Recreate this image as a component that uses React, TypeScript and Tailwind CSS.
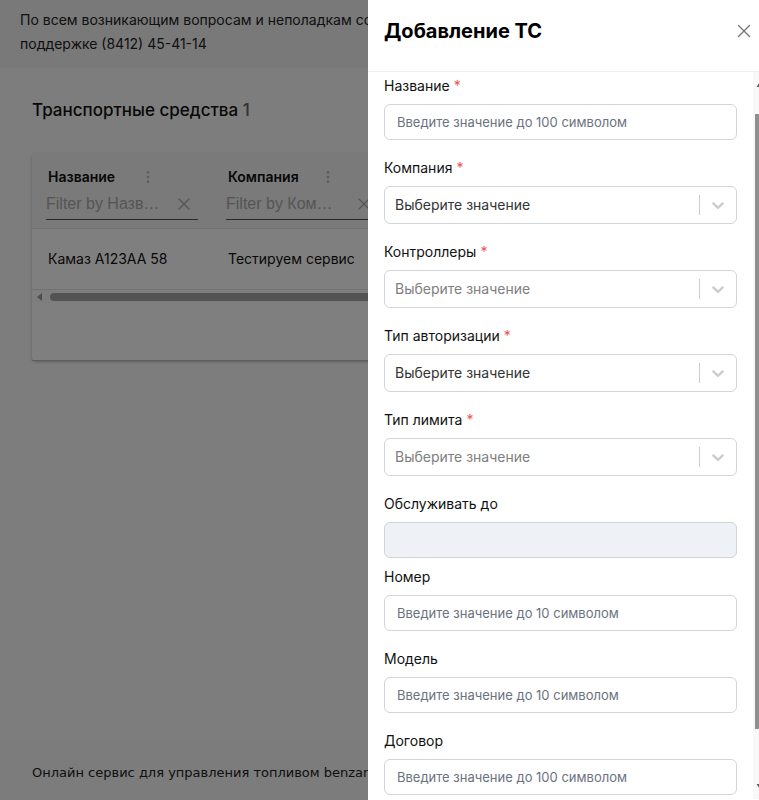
import React from "react";
import { X, EllipsisVertical } from "lucide-react";

const fields = [
  { label: "Название", kind: "input", required: true, placeholder: "Введите значение до 100 символом" },
  { label: "Компания", kind: "select", required: true, dark: true },
  { label: "Контроллеры", kind: "select", required: true },
  { label: "Тип авторизации", kind: "select", required: true, dark: true },
  { label: "Тип лимита", kind: "select", required: true },
  { label: "Обслуживать до", kind: "disabled" },
  { label: "Номер", kind: "input", placeholder: "Введите значение до 10 символом" },
  { label: "Модель", kind: "input", placeholder: "Введите значение до 10 символом" },
  { label: "Договор", kind: "input", placeholder: "Введите значение до 100 символом" },
];

function Chevron() {
  return (
    <svg viewBox="0 0 20 20" width="20" height="20" fill="#cccccc">
      <path d="M4.516 7.548c0.436-0.446 1.043-0.481 1.576 0l3.908 3.747 3.908-3.747c0.533-0.481 1.141-0.446 1.574 0 0.436 0.445 0.408 1.197 0 1.615-0.406 0.418-4.695 4.502-4.695 4.502-0.217 0.223-0.502 0.335-0.787 0.335s-0.57-0.112-0.789-0.335c0 0-4.287-4.084-4.695-4.502s-0.436-1.17 0-1.615z" />
    </svg>
  );
}

// Vertical scrollbar of the drawer body (track, arrows and thumb)
function ScrollBar() {
  return (
    <svg width="15" height="727" viewBox="0 0 15 727" className="shrink-0">
      <rect x="0" y="0" width="15" height="727" fill="#f8f8f8" />
      <path d="M3.5 15 L7.5 9 L11.5 15 Z" fill="#606060" />
      <rect x="2" y="42" width="11" height="615" fill="#8f8f8f" />
      <path d="M3.5 712 L7.5 718 L11.5 712 Z" fill="#606060" />
    </svg>
  );
}

function Field({ f }: { f: (typeof fields)[number] }) {
  return (
    <div className={f.kind === "disabled" ? "mb-[9px]" : "mb-[18px]"}>
      <div className="mb-2 text-sm leading-5 text-[#111]">
        {f.label}
        {f.required && <span className="ml-1 text-[#f05252]">*</span>}
      </div>
      {f.kind === "input" && (
        <input
          placeholder={f.placeholder}
          className="block h-9 w-full rounded-md border border-[#d1d5db] px-3 text-[13px] text-[#111] outline-none placeholder:text-[#6b7280]"
        />
      )}
      {f.kind === "disabled" && (
        <div className="h-9 w-full rounded-md border border-[#d1d5db] bg-[#eef1f5]" />
      )}
      {f.kind === "select" && (
        <div className="flex h-[38px] w-full items-center rounded-md border border-[#d1d5db]">
          <span className={`flex-1 pl-[10px] text-sm ${f.dark ? "text-[#333]" : "text-[#808080]"}`}>
            Выберите значение
          </span>
          <span className="h-5 w-px bg-[#cccccc]" />
          <span className="flex w-9 items-center justify-center">
            <Chevron />
          </span>
        </div>
      )}
    </div>
  );
}

function FilterCell({ label, filter }: { label: string; filter: string }) {
  return (
    <div className="w-[180px] shrink-0 px-[14px] pt-[14px]">
      <div className="flex h-5 items-center pl-[2px]">
        <span className="w-[92px] text-sm font-semibold text-[#111]">{label}</span>
        <EllipsisVertical size={16} className="text-[#bbb]" />
      </div>
      <div className="mt-[3px] flex h-[30px] items-center border-b border-[#555] pb-[2px]">
        <span className="w-[114px] truncate font-['Liberation_Sans',sans-serif] text-[16px] text-[#aaa]">{filter}</span>
        <X size={20} strokeWidth={1.5} className="ml-auto mr-[4px] text-[#aaa]" />
      </div>
    </div>
  );
}

export default function App() {
  return (
    <div className="relative h-[800px] w-[759px] overflow-hidden bg-white font-['Inter',sans-serif]">
      {/* Page under the drawer */}
      <div className="flex h-full flex-col bg-[#fbfbfb]">
        <div className="h-[68px] bg-[#f3f3f3] px-5 pt-2 text-sm leading-6 text-[#222]">
          По всем возникающим вопросам и неполадкам сообщайте нашей службе технической
          <br />
          поддержке (8412) 45-41-14
        </div>

        <div className="flex-1 px-8 pt-7">
          <h2 className="text-[17px] font-medium leading-7 text-[#111]">
            Транспортные средства <span className="text-[#666]">1</span>
          </h2>

          <div className="mt-[29px] w-[760px] rounded-sm bg-white shadow-[0_1px_3px_rgba(0,0,0,0.25)]">
            <div className="flex h-[76px] border-b border-[#e5e5e5] bg-[#f4f4f4]">
              <FilterCell label="Название" filter="Filter by Названию" />
              <FilterCell label="Компания" filter="Filter by Компании" />
            </div>
            <div className="flex h-[61px] items-center border-b border-[#e5e5e5] text-sm text-[#111]">
              <span className="w-[180px] pl-4">Камаз А123АА 58</span>
              <span className="pl-4">Тестируем сервис</span>
            </div>
            <div className="flex h-[14px] items-center bg-[#fdfdfd] pl-[5px]">
              <svg width="6" height="8" viewBox="0 0 6 8" fill="#9a9a9a">
                <path d="M5 0 L0 4 L5 8 Z" />
              </svg>
              <div className="ml-[7px] h-[8px] flex-1 rounded-full bg-[#a6a6a6]" />
            </div>
            <div className="h-[57px] border-b border-[#bdbdbd]" />
          </div>
        </div>

        <div className="h-[58px] bg-[#f8f8f8] px-8 pt-[21px] font-['DejaVu_Sans',sans-serif] text-[13px] leading-5 text-[#222]">
          Онлайн сервис для управления топливом benzanet.ru
        </div>
      </div>

      {/* Overlay */}
      <div className="absolute inset-0 bg-black/50" />

      {/* Drawer */}
      <div className="absolute left-[368px] top-0 flex h-full w-[400px] flex-col bg-white">
        <div className="flex h-[72px] shrink-0 items-start justify-between border-b border-[#eeeeee] px-4 pt-[17px]">
          <h1 className="text-xl font-bold leading-7 text-black">Добавление ТС</h1>
          <X size={22} strokeWidth={1.5} className="mt-[3px] -mr-[3px] text-[#777]" />
        </div>
        <div className="flex min-h-0 flex-1">
          <div className="min-w-0 flex-1 overflow-hidden px-4 pt-[4px]">
            {fields.map((f) => (
              <Field key={f.label} f={f} />
            ))}
          </div>
          <ScrollBar />
        </div>
      </div>
    </div>
  );
}
